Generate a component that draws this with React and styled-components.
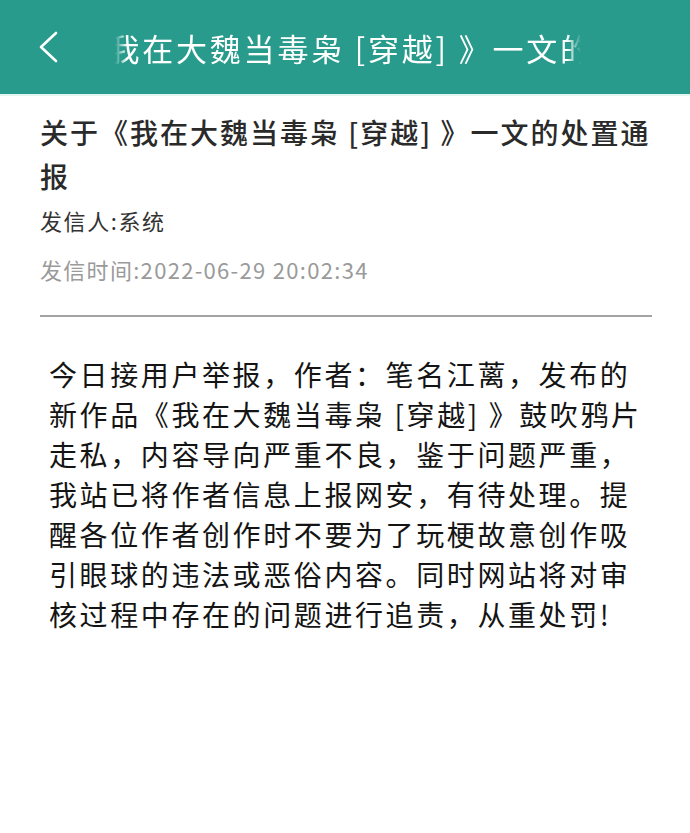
import React from "react";
import styled, { createGlobalStyle } from "styled-components";

const GlobalStyle = createGlobalStyle`
  html, body {
    margin: 0;
    padding: 0;
    background: #ffffff;
  }
  body {
    font-family: "Noto Sans CJK SC", "Noto Sans", sans-serif;
  }
`;

const bodyLines = [
  "今日接用户举报，作者：笔名江蓠，发布的",
  "新作品《我在大魏当毒枭 [穿越] 》鼓吹鸦片",
  "走私，内容导向严重不良，鉴于问题严重，",
  "我站已将作者信息上报网安，有待处理。提",
  "醒各位作者创作时不要为了玩梗故意创作吸",
  "引眼球的违法或恶俗内容。同时网站将对审",
  "核过程中存在的问题进行追责，从重处罚!",
];

function App() {
  return (
    <Page>
      <GlobalStyle />
      <TopBar>
        <BackButton aria-label="返回">
          <svg width="24" height="32" viewBox="0 0 24 32" fill="none">
            <path
              d="M20 2 L5 16 L20 30"
              stroke="#ffffff"
              strokeWidth="2.6"
              strokeLinecap="round"
              strokeLinejoin="round"
            />
          </svg>
        </BackButton>
        <Marquee>
          <MarqueeText>关于《我在大魏当毒枭 [穿越] 》一文的处置通报</MarqueeText>
        </Marquee>
      </TopBar>

      <Article>
        <Title>关于《我在大魏当毒枭 [穿越] 》一文的处置通报</Title>
        <Sender>发信人:系统</Sender>
        <SendTime>发信时间:2022-06-29 20:02:34</SendTime>
        <Divider />
        <Content>
          {bodyLines.map((line) => (
            <Line key={line}>{line}</Line>
          ))}
        </Content>
      </Article>
    </Page>
  );
}

const Page = styled.div`
  width: 690px;
  min-height: 833px;
  background: #ffffff;
`;

const TopBar = styled.div`
  height: 96px;
  background-color: #289b8c;
  display: flex;
  align-items: center;
  padding-left: 36px;
  box-sizing: border-box;
  border-bottom: 2px solid #e3f5f1;
`;

const BackButton = styled.div`
  width: 24px;
  height: 32px;
  display: flex;
  align-items: center;
  margin-right: 55px;
`;

const Marquee = styled.div`
  width: 466px;
  overflow: hidden;
  white-space: nowrap;
  -webkit-mask-image: linear-gradient(
    to right,
    transparent 0,
    #000 12px,
    #000 452px,
    transparent 466px
  );
  mask-image: linear-gradient(
    to right,
    transparent 0,
    #000 12px,
    #000 452px,
    transparent 466px
  );
`;

const MarqueeText = styled.span`
  display: inline-block;
  color: #ffffff;
  font-size: 31px;
  letter-spacing: 2.8px;
  transform: translateX(-108px);
`;

const Article = styled.div`
  padding: 0 38px 0 40px;
`;

const Title = styled.h1`
  margin: 14px -12px 0 0;
  font-size: 28px;
  font-weight: 500;
  line-height: 44px;
  letter-spacing: 2px;
  color: #2a2a2a;
`;

const Sender = styled.div`
  margin-top: 7px;
  font-size: 22px;
  line-height: 30px;
  letter-spacing: 1.6px;
  color: #333333;
`;

const SendTime = styled.div`
  margin-top: 19px;
  font-size: 22px;
  line-height: 30px;
  letter-spacing: 1.3px;
  color: #9a9a9a;
`;

const Divider = styled.div`
  margin-top: 31px;
  height: 2px;
  background: #a3a3a3;
`;

const Content = styled.div`
  padding: 37px 0 0 9px;
`;

const Line = styled.div`
  font-size: 28px;
  line-height: 40px;
  height: 40px;
  white-space: nowrap;
  letter-spacing: 2.6px;
  color: #141414;
`;

export default App;
